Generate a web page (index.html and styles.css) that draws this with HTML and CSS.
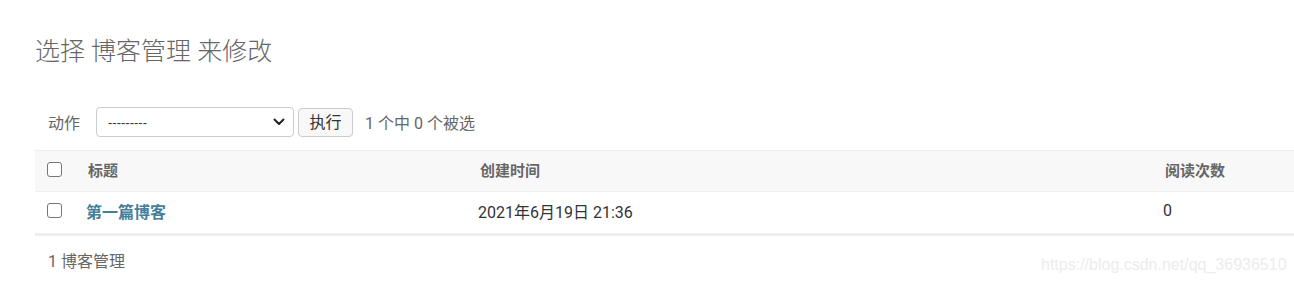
FILE: index.html
```html
<!DOCTYPE html>
<html lang="zh">
<head>
<meta charset="utf-8">
<title>选择 博客管理 来修改</title>
<link rel="stylesheet" href="styles.css">
</head>
<body>
<div class="content">
  <h1 class="title">选择 博客管理 来修改</h1>
  <div class="actions">
    <label class="actions-label">动作</label>
    <div class="select">
      <span class="select-text">---------</span>
      <svg class="chev" width="12" height="8" viewBox="0 0 12 8"><path d="M1.5 1.5 L6 6 L10.5 1.5" fill="none" stroke="#222" stroke-width="2" stroke-linecap="round" stroke-linejoin="round"/></svg>
    </div>
    <button class="go">执行</button>
    <span class="counter">1 个中 0 个被选</span>
  </div>
  <div class="table">
    <div class="row head">
      <div class="c-check"><span class="cb"></span></div>
      <div class="c-title">标题</div>
      <div class="c-date">创建时间</div>
      <div class="c-read">阅读次数</div>
    </div>
    <div class="row body">
      <div class="c-check"><span class="cb"></span></div>
      <div class="c-title"><a class="link">第一篇博客</a></div>
      <div class="c-date">2021年6月19日 21:36</div>
      <div class="c-read">0</div>
    </div>
  </div>
  <p class="paginator">1 博客管理</p>
</div>
<div class="watermark">https://blog.csdn.net/qq_36936510</div>
</body>
</html>
```

FILE: styles.css
```css
html, body {
  margin: 0;
  padding: 0;
  background: #fff;
}
body {
  font-family: Roboto, "Noto Sans CJK SC", "Liberation Sans", sans-serif;
  color: #333;
  width: 1294px;
  height: 284px;
  overflow: hidden;
  position: relative;
}
.content {
  padding-left: 35px;
  padding-top: 36px;
}
.title {
  margin: 0;
  font-size: 25px;
  font-weight: 300;
  color: #666;
  line-height: 32px;
  height: 32px;
}
.actions {
  margin-top: 39px;
  display: flex;
  align-items: center;
  height: 30px;
  padding-left: 13px;
}
.actions-label {
  font-size: 16px;
  color: #666;
  width: 48px;
  padding-bottom: 1px;
}
.select {
  box-sizing: border-box;
  width: 198px;
  height: 30px;
  border: 1px solid #ccc;
  border-radius: 4px;
  display: flex;
  align-items: center;
  justify-content: space-between;
  padding: 0 8px 0 11px;
  font-size: 14px;
  color: #333;
}
.select-text {
  font-family: "Liberation Sans", sans-serif;
  font-size: 13px;
}
.go {
  box-sizing: border-box;
  margin-left: 4px;
  width: 55px;
  height: 29px;
  border: 1px solid #ccc;
  border-radius: 4px;
  background: #f8f8f8;
  font-family: inherit;
  font-size: 16px;
  color: #333;
  padding: 0 0 2px;
}
.counter {
  margin-left: 12px;
  font-size: 16px;
  color: #666;
  padding-bottom: 1px;
}
.table {
  margin-top: 13px;
  width: 1280px;
  border-bottom: 3px solid #eee;
}
.row {
  display: flex;
  align-items: center;
  box-sizing: border-box;
}
.head {
  height: 42px;
  padding-bottom: 4px;
  background: #f8f8f8;
  border-top: 1px solid #eee;
  border-bottom: 1px solid #eee;
  font-size: 15px;
  font-weight: 600;
  color: #666;
}
.body {
  height: 41px;
  padding-bottom: 4px;
  font-size: 16px;
  color: #333;
}
.c-check {
  box-sizing: border-box;
  width: 51px;
  padding-left: 12px;
  display: flex;
  align-items: center;
}
.cb {
  box-sizing: border-box;
  width: 15px;
  height: 15px;
  border: 1px solid #777;
  border-radius: 3px;
  background: #fff;
}
.c-title {
  box-sizing: border-box;
  width: 392px;
}
.c-date {
  box-sizing: border-box;
  width: 685px;
}
.c-read {
  flex: 1;
}
.head .c-title,
.head .c-date,
.head .c-read { padding-left: 2px; }
.link {
  color: #447e9b;
  font-weight: 600;
  font-size: 16px;
}
.paginator {
  margin: 0;
  padding: 12px 0 0 13px;
  font-size: 16px;
  color: #666;
}
.watermark {
  position: absolute;
  left: 1041px;
  top: 256px;
  font-family: "Liberation Sans", Arial, sans-serif;
  font-size: 16px;
  color: #ececec;
}
```
